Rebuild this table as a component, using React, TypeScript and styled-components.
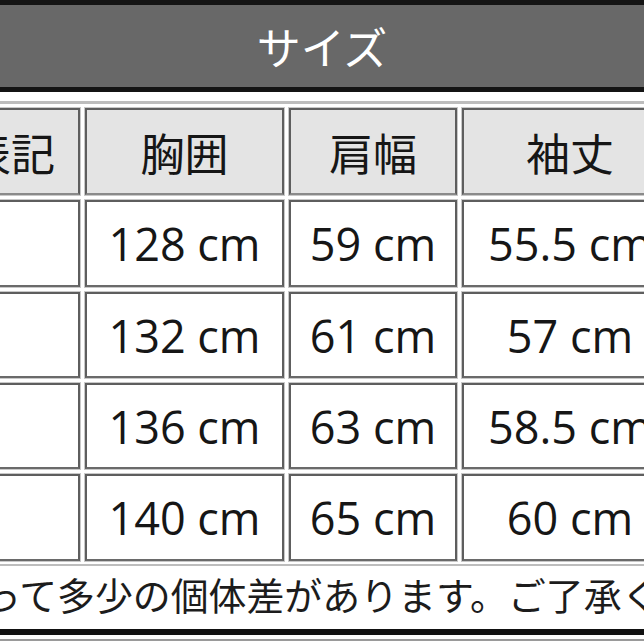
import React from "react";
import styled, { createGlobalStyle } from "styled-components";

const GlobalStyle = createGlobalStyle`
  html, body { margin: 0; padding: 0; background: #fff; }
  body { width: 644px; height: 644px; overflow: hidden; }
`;

const Page = styled.div`
  width: 644px;
  height: 644px;
  overflow: hidden;
  background: #fff;
  display: flex;
  flex-direction: column;
`;

const TitleBar = styled.div`
  flex: none;
  height: 82px;
  background: #686868;
  border-top: 5px solid #141414;
  border-bottom: 5px solid #141414;
  display: flex;
  align-items: center;
  justify-content: center;
  color: #fff;
  font: 400 44px/1 "Noto Sans CJK JP", sans-serif;
`;

const Table = styled.div`
  flex: none;
  margin: 9px 0 0 -65px;
  width: max-content;
  border: 3px solid #bdbdbd;
  border-bottom-width: 2px;
  padding: 4px 4px 3px 4px;
  display: grid;
  grid-template-columns: 138px 199px 168px 216px;
  grid-template-rows: 87px 87px 86px 86px 87px;
  gap: 5px;
  background: #fff;
`;

const Cell = styled.div<{ $head?: boolean }>`
  box-sizing: border-box;
  border: 2px solid #5e5e5e;
  border-bottom-color: ${(p) => (p.$head ? "#8a8a8a" : "#6a6a6a")};
  box-shadow: 0 0 0 1px #c8c8c8;
  background: ${(p) => (p.$head ? "#e4e4e4" : "#fff")};
  display: flex;
  align-items: center;
  justify-content: center;
  white-space: nowrap;
  color: #161616;
  font: ${(p) =>
    p.$head
      ? `400 44px/1 "Noto Sans CJK JP", sans-serif`
      : `400 45px/1 "Open Sans", "Noto Sans", sans-serif`};
`;

const Note = styled.div`
  flex: none;
  height: 63px;
  box-sizing: border-box;
  padding-bottom: 8px;
  display: flex;
  align-items: center;
  overflow: hidden;
  white-space: nowrap;
  color: #1c1c1c;
  font: 400 37.9px/1 "Noto Sans CJK JP", sans-serif;
`;

const NoteText = styled.span`
  margin-left: -91.5px;
`;

const BottomRule = styled.div`
  flex: none;
  height: 4px;
  border-top: 6px solid #111;
  border-bottom: 2px solid #9a9a9a;
`;

const headers = ["表記", "胸囲", "肩幅", "袖丈"];
const rows = [
  ["", "128 cm", "59 cm", "55.5 cm"],
  ["", "132 cm", "61 cm", "57 cm"],
  ["", "136 cm", "63 cm", "58.5 cm"],
  ["", "140 cm", "65 cm", "60 cm"],
];

export default function App() {
  return (
    <>
      <GlobalStyle />
      <Page>
        <TitleBar>サイズ</TitleBar>
        <Table>
          {headers.map((h) => (
            <Cell $head key={h}>
              {h}
            </Cell>
          ))}
          {rows.map((r, i) =>
            r.map((v, j) => <Cell key={`${i}-${j}`}>{v}</Cell>)
          )}
        </Table>
        <Note>
          <NoteText>によって多少の個体差があります。ご了承ください。</NoteText>
        </Note>
        <BottomRule />
      </Page>
    </>
  );
}
